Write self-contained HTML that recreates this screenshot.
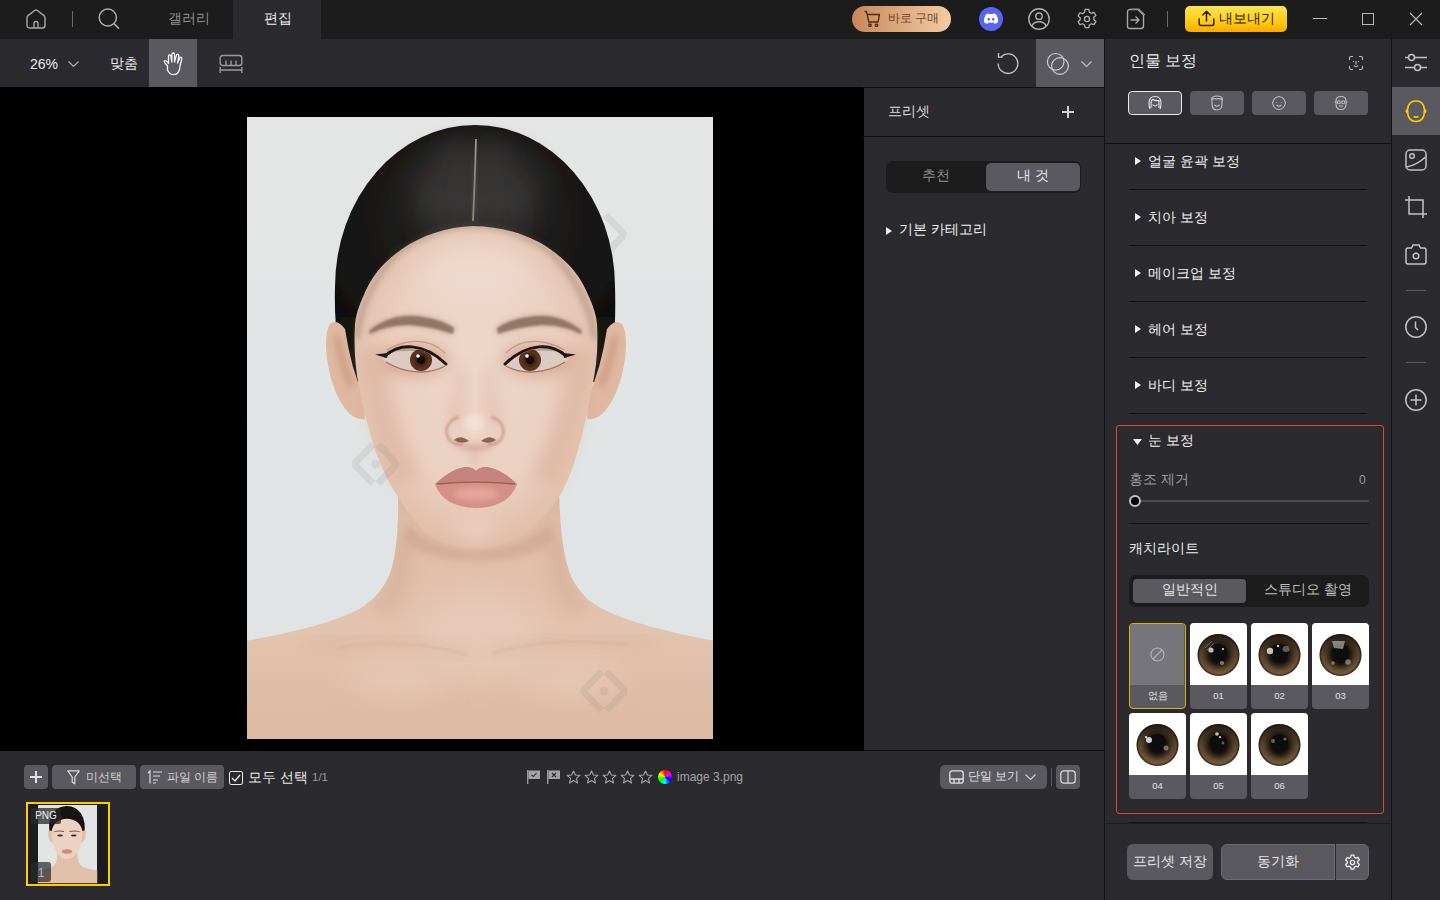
<!DOCTYPE html>
<html><head><meta charset="utf-8">
<style>
*{margin:0;padding:0;box-sizing:border-box}
html,body{width:1440px;height:900px;overflow:hidden;background:#2b2a2f;font-family:"Liberation Sans",sans-serif;color:#e6e6e6}
.a{position:absolute}
svg{position:absolute;overflow:visible}
.t{position:absolute;white-space:nowrap;line-height:1}
</style></head><body>
<!-- top bar -->
<div class="a" style="left:0;top:0;width:1440px;height:39px;background:#1c1c1c"></div>
<div class="a" style="left:233px;top:0;width:88px;height:39px;background:#2b2a2f"></div>
<!-- toolbar -->
<div class="a" style="left:0;top:39px;width:1104px;height:48px;background:#2b2a2f"></div>
<div class="a" style="left:149px;top:39px;width:48px;height:48px;background:#5a5960"></div>
<div class="a" style="left:1036px;top:39px;width:68px;height:48px;background:#5a5960"></div>
<!-- canvas -->
<div class="a" style="left:0;top:87px;width:864px;height:664px;background:#000"></div>

<!-- PHOTO -->
<svg style="left:247px;top:117px;overflow:hidden" width="466" height="622" viewBox="0 0 466 622">
<defs>
<filter id="b1" x="-20%" y="-20%" width="140%" height="140%"><feGaussianBlur stdDeviation="1"/></filter>
<filter id="b2" x="-50%" y="-50%" width="200%" height="200%"><feGaussianBlur stdDeviation="3"/></filter>
<filter id="b3" x="-50%" y="-50%" width="200%" height="200%"><feGaussianBlur stdDeviation="8"/></filter>
<filter id="b4" x="-50%" y="-50%" width="200%" height="200%"><feGaussianBlur stdDeviation="14"/></filter>
<filter id="b05"><feGaussianBlur stdDeviation="0.6"/></filter>
<linearGradient id="bg" x1="0" y1="0" x2="0" y2="1"><stop offset="0" stop-color="#e4e6e6"/><stop offset="1" stop-color="#dfe3e3"/></linearGradient>
<radialGradient id="sk" cx="50%" cy="45%" r="60%"><stop offset="0" stop-color="#eed7ca"/><stop offset="0.6" stop-color="#ebd0c0"/><stop offset="1" stop-color="#ddb9a3"/></radialGradient>
<linearGradient id="sh" x1="0" y1="0" x2="0" y2="1"><stop offset="0" stop-color="#d8b49e"/><stop offset="0.2" stop-color="#dfbea9"/><stop offset="0.55" stop-color="#e3c4b0"/><stop offset="1" stop-color="#dcb9a2"/></linearGradient>
<radialGradient id="hr" cx="50%" cy="35%" r="65%"><stop offset="0" stop-color="#2c2a29"/><stop offset="0.5" stop-color="#1c1a19"/><stop offset="1" stop-color="#0f0e0e"/></radialGradient>
</defs>
<rect width="466" height="622" fill="url(#bg)"/>
<!-- shoulders + neck -->
<path fill="url(#sh)" filter="url(#b05)" d="M151 370 C152 420 148 448 140 463 C132 478 122 486 112 492 C90 504 50 515 -2 524 L-2 624 L468 624 L468 524 C420 515 378 504 356 492 C344 486 334 478 326 463 C318 448 313 420 312 370 Z"/>
<defs><clipPath id="bodyc"><path d="M151 370 C152 420 148 448 140 463 C132 478 122 486 112 492 C90 504 50 515 -2 524 L-2 624 L468 624 L468 524 C420 515 378 504 356 492 C344 486 334 478 326 463 C318 448 313 420 312 370 Z"/></clipPath></defs><g clip-path="url(#bodyc)">
<!-- neck center light -->
<ellipse cx="232" cy="520" rx="60" ry="45" fill="#e8cdbb" opacity="0.6" filter="url(#b4)"/>
<!-- under chin shadow -->
<path fill="#c4957f" opacity="0.4" filter="url(#b2)" d="M160 408 Q192 432 228 434 Q266 432 304 408 L308 422 Q285 444 228 444 Q172 442 155 422Z"/>
<!-- neck side shading -->
<path fill="#cfa58f" opacity="0.45" filter="url(#b3)" d="M146 420 Q150 470 120 492 L145 498 Q168 470 166 420Z"/>
<path fill="#cfa58f" opacity="0.45" filter="url(#b3)" d="M320 420 Q316 470 346 492 L321 498 Q298 470 300 420Z"/>
</g>
<g transform="translate(356 117.5)" fill="none" stroke="#7a7a7a" stroke-width="7" stroke-linejoin="round" opacity="0.13"><path d="M-2.5 -19.5 L-19.5 -2 Q-21 0 -19.5 2 L-2.5 19.5"/><path d="M2.5 -19.5 L19.5 -2 Q21 0 19.5 2 L2.5 19.5"/><circle cx="0" cy="0" r="4.5" fill="#7a7a7a" stroke="none"/></g>
<!-- hair -->
<path fill="url(#hr)" filter="url(#b05)" d="M88 170 A140 162 0 0 1 368 170 Q369 205 366 232 Q360 255 350 265 L110 265 Q96 255 92 232 Q87 205 88 170Z"/>
<!-- hair sheen -->
<ellipse cx="200" cy="75" rx="35" ry="38" fill="#4a4746" opacity="0.5" filter="url(#b4)"/>
<ellipse cx="258" cy="75" rx="35" ry="38" fill="#4a4746" opacity="0.5" filter="url(#b4)"/>
<ellipse cx="228" cy="40" rx="40" ry="20" fill="#3a3837" opacity="0.5" filter="url(#b3)"/>
<!-- ears -->
<path fill="#15120f" filter="url(#b05)" d="M92 200 L112 200 L114 262 Q108 250 100 230 Q94 215 92 200Z"/><path fill="#15120f" filter="url(#b05)" d="M366 200 L346 200 L344 262 Q350 250 358 230 Q364 215 366 200Z"/>
<path fill="#dfb8a1" filter="url(#b05)" d="M98 212 Q90 201 83 207 Q77 216 80 242 Q85 276 100 294 Q109 304 118 302 L117 280 Q104 252 98 212 Z"/><path fill="#dfb8a1" filter="url(#b05)" d="M 360 212 Q 368 201 375 207 Q 381 216 378 242 Q 373 276 358 294 Q 349 304 340 302 L 341 280 Q 354 252 360 212 Z"/>
<path fill="#bf8970" opacity="0.5" filter="url(#b2)" d="M87 218 Q90 250 102 272 L108 266 Q98 245 95 220Z"/><path fill="#bf8970" opacity="0.5" filter="url(#b2)" d="M 371 218 Q 368 250 356 272 L 350 266 Q 360 245 363 220 Z"/>
<!-- face -->
<path fill="url(#sk)" filter="url(#b05)" d="M226 109 C200 110 175 118 155 132 C135 146 124 160 116 180 Q109 195 108 207 Q106 240 112 270 Q118 300 128 333 Q140 365 153 383 Q165 402 176 413 Q200 431 228 431 Q256 431 283 413 Q296 402 310 383 Q322 365 331 333 Q340 300 345 270 Q352 240 350 207 Q349 195 342 180 C334 160 323 146 303 132 C283 118 258 110 226 109Z"/>
<!-- part -->
<path d="M229 22 Q228 60 226 104" stroke="#a09388" stroke-width="1.8" fill="none" filter="url(#b05)"/>
<path d="M229 45 Q228 70 226 104" stroke="#5e5650" stroke-width="6" fill="none" opacity="0.35" filter="url(#b2)"/>
<!-- hairline soft -->
<path d="M110 222 Q114 175 150 136 Q190 108 226 109 Q266 108 305 136 Q342 175 348 222" stroke="#5a463b" stroke-width="4" fill="none" opacity="0.4" filter="url(#b2)"/>
<!-- face side shading -->
<path fill="#d3a58f" opacity="0.4" filter="url(#b3)" d="M112 230 Q115 300 150 370 L175 360 Q145 300 140 230Z"/>
<path fill="#d3a58f" opacity="0.4" filter="url(#b3)" d="M346 230 Q343 300 308 370 L283 360 Q313 300 318 230Z"/>
<!-- forehead highlight -->
<ellipse cx="228" cy="160" rx="55" ry="30" fill="#f2e0d6" opacity="0.5" filter="url(#b4)"/>
<!-- eyebrows -->
<path fill="#9a7c6b" opacity="0.6" filter="url(#b2)" d="M122 214 C135 203 150 198 165 199 C185 200 198 205 207 211 L206 217 C192 212 178 209 162 208 C148 208 134 211 123 217 Z"/>
<path fill="#9a7c6b" opacity="0.6" filter="url(#b2)" d="M 335 214 C 322 203 307 198 292 199 C 272 200 259 205 250 211 L 251 217 C 265 212 279 209 295 208 C 309 208 323 211 334 217 Z"/>
<path fill="#8a6d5d" opacity="0.85" filter="url(#b1)" d="M122 214 C135 203 150 198 165 199 C185 200 198 205 207 211 L206 217 C192 212 178 209 162 208 C148 208 134 211 123 217 Z"/>
<path fill="#8a6d5d" opacity="0.85" filter="url(#b1)" d="M 335 214 C 322 203 307 198 292 199 C 272 200 259 205 250 211 L 251 217 C 265 212 279 209 295 208 C 309 208 323 211 334 217 Z"/>
<!-- eye shadow -->
<ellipse cx="168" cy="243" rx="34" ry="15" fill="#c9866f" opacity="0.6" filter="url(#b3)"/>
<ellipse cx="289" cy="243" rx="34" ry="15" fill="#c9866f" opacity="0.6" filter="url(#b3)"/>
<defs><clipPath id="eL"><path d="M135 242 C148 230 172 224 199 248 C182 257 156 257 135 242 Z"/></clipPath><clipPath id="eR"><path d="M 322 242 C 309 230 285 224 258 248 C 275 257 301 257 322 242 Z"/></clipPath></defs>
<path d="M135 242 C148 230 172 224 199 248 C182 257 156 257 135 242 Z" fill="#dccbc3"/>
<g clip-path="url(#eL)"><circle cx="174" cy="243" r="11" fill="#5b3220"/><circle cx="174" cy="243" r="7" fill="#3c2013" opacity="0.6"/><circle cx="174" cy="243" r="4.3" fill="#150b07"/><circle cx="171" cy="239" r="1.8" fill="#fff"/><path d="M120 223 H340 V236 Q174 231 120 236Z" fill="#3a2218" opacity="0.25"/></g>
<path d="M140 233 C158 222 182 220 198 236" stroke="#a87464" stroke-width="1.3" fill="none" opacity="0.55" filter="url(#b05)"/>
<path d="M199 247 C176 225 152 226 138 239" stroke="#1f1410" stroke-width="3" fill="none" stroke-linecap="round" filter="url(#b05)"/>
<path d="M139 245 C158 257 182 258 198 249" stroke="#8f6052" stroke-width="1.4" fill="none" opacity="0.75" filter="url(#b05)"/>
<path d="M 322 242 C 309 230 285 224 258 248 C 275 257 301 257 322 242 Z" fill="#dccbc3"/>
<g clip-path="url(#eR)"><circle cx="283" cy="243" r="11" fill="#5b3220"/><circle cx="283" cy="243" r="7" fill="#3c2013" opacity="0.6"/><circle cx="283" cy="243" r="4.3" fill="#150b07"/><circle cx="280" cy="239" r="1.8" fill="#fff"/><path d="M120 223 H340 V236 Q283 231 120 236Z" fill="#3a2218" opacity="0.25"/></g>
<path d="M 317 233 C 299 222 275 220 259 236" stroke="#a87464" stroke-width="1.3" fill="none" opacity="0.55" filter="url(#b05)"/>
<path d="M 258 247 C 281 225 305 226 319 239" stroke="#1f1410" stroke-width="3" fill="none" stroke-linecap="round" filter="url(#b05)"/>
<path d="M 318 245 C 299 257 275 258 259 249" stroke="#8f6052" stroke-width="1.4" fill="none" opacity="0.75" filter="url(#b05)"/>
<path d="M141 236 L128 237.5 L140 241 Z" fill="#1f1410" filter="url(#b05)"/><path d="M316 236 L329 237.5 L317 241 Z" fill="#1f1410" filter="url(#b05)"/>
<!-- nose -->
<path fill="#cf9b85" opacity="0.45" filter="url(#b3)" d="M212 250 Q208 285 202 305 L212 312 Q216 285 219 250Z"/>
<path fill="#cf9b85" opacity="0.45" filter="url(#b3)" d="M244 250 Q248 285 254 305 L244 312 Q240 285 237 250Z"/>
<path d="M212 300 C203 302 198 310 200 318 C202 325 208 328 216 327" stroke="#bf8a74" stroke-width="3" fill="none" opacity="0.6" filter="url(#b1)"/>
<path d="M 244 300 C 253 302 258 310 256 318 C 254 325 248 328 240 327" stroke="#bf8a74" stroke-width="3" fill="none" opacity="0.6" filter="url(#b1)"/>
<path fill="#c7917c" opacity="0.7" filter="url(#b2)" d="M204 322 Q212 334 228 334 Q244 334 252 322 Q244 328 228 328 Q212 328 204 322Z"/>
<ellipse cx="227" cy="306" rx="10" ry="9" fill="#f4e2d8" opacity="0.9" filter="url(#b2)"/>
<path fill="#7e5040" opacity="0.85" filter="url(#b05)" d="M207 323 Q213 317 222 324 Q214 328 207 323Z M249 323 Q243 317 234 324 Q242 328 249 323Z"/>
<!-- philtrum -->
<ellipse cx="228" cy="342" rx="6" ry="8" fill="#e0bca8" opacity="0.5" filter="url(#b2)"/>
<!-- lips -->
<path fill="#d48f86" filter="url(#b05)" d="M188 367 Q204 352 218 350 Q226 350 229 354 Q232 350 240 350 Q254 352 270 367 Q262 390 229 391 Q196 390 188 367Z"/>
<path fill="#c4847b" filter="url(#b05)" d="M188 367 Q204 352 218 350 Q226 350 229 354 Q232 350 240 350 Q254 352 270 367 Q229 360 188 367Z"/>
<path d="M190 367 Q229 363 268 367" stroke="#9e5e57" stroke-width="1.6" fill="none" filter="url(#b05)"/>
<ellipse cx="229" cy="377" rx="22" ry="6" fill="#eab0a6" opacity="0.75" filter="url(#b2)"/>
<!-- chin highlight -->
<ellipse cx="228" cy="412" rx="20" ry="10" fill="#f0dcd0" opacity="0.45" filter="url(#b3)"/>
<g clip-path="url(#bodyc)">
<!-- collarbone -->
<path d="M60 528 Q150 518 222 538" stroke="#c99e88" stroke-width="6" fill="none" opacity="0.35" filter="url(#b3)"/>
<path d="M406 526 Q316 516 242 536" stroke="#c99e88" stroke-width="6" fill="none" opacity="0.35" filter="url(#b3)"/>
<path d="M90 531 Q160 520 220 538" stroke="#cda38d" stroke-width="1.5" fill="none" opacity="0.45" filter="url(#b1)"/>
<path d="M380 528 Q310 518 246 536" stroke="#cda38d" stroke-width="1.5" fill="none" opacity="0.45" filter="url(#b1)"/>
<ellipse cx="150" cy="560" rx="50" ry="20" fill="#ead0bf" opacity="0.5" filter="url(#b4)"/>
<ellipse cx="320" cy="560" rx="50" ry="20" fill="#ead0bf" opacity="0.5" filter="url(#b4)"/>
</g>
<!-- watermarks -->
<g transform="translate(128.5 347)" fill="none" stroke="#7a7a7a" stroke-width="7" stroke-linejoin="round" opacity="0.13"><path d="M-2.5 -19.5 L-19.5 -2 Q-21 0 -19.5 2 L-2.5 19.5"/><path d="M2.5 -19.5 L19.5 -2 Q21 0 19.5 2 L2.5 19.5"/><circle cx="0" cy="0" r="4.5" fill="#7a7a7a" stroke="none"/></g>
<g transform="translate(357 574)" fill="none" stroke="#7a7a7a" stroke-width="7" stroke-linejoin="round" opacity="0.13"><path d="M-2.5 -19.5 L-19.5 -2 Q-21 0 -19.5 2 L-2.5 19.5"/><path d="M2.5 -19.5 L19.5 -2 Q21 0 19.5 2 L2.5 19.5"/><circle cx="0" cy="0" r="4.5" fill="#7a7a7a" stroke="none"/></g>
</svg>
<!-- preset panel -->
<div class="a" style="left:864px;top:88px;width:240px;height:662px;background:#2b2a2f"></div>
<div class="a" style="left:863px;top:136px;width:241px;height:1px;background:#131315"></div>
<div class="a" style="left:863px;top:87px;width:241px;height:1px;background:#131315"></div>

<!-- PRESET CONTENT -->
<div class="t" style="left:888px;top:104px;font-size:14px;color:#dcdcdc">프리셋</div>
<div class="a" style="left:1062px;top:111px;width:12px;height:1.5px;background:#cfcfcf"></div>
<div class="a" style="left:1067.25px;top:106px;width:1.5px;height:12px;background:#cfcfcf"></div>
<div class="a" style="left:886px;top:161px;width:195px;height:32px;border-radius:7px;background:#1c1c1d"></div>
<div class="a" style="left:986px;top:163px;width:94px;height:28px;border-radius:5px;background:#5a5960"></div>
<div class="t" style="left:886px;top:168px;width:100px;text-align:center;font-size:14px;color:#8e8e8e">추천</div>
<div class="t" style="left:986px;top:168px;width:94px;text-align:center;font-size:14px;color:#e6e6e6">내 것</div>
<svg style="left:886px;top:227px" width="6" height="8" viewBox="0 0 6 8"><path d="M0 0 L6 4 L0 8Z" fill="#f0f0f0"/></svg>
<div class="t" style="left:899px;top:222px;font-size:14px;color:#f0f0f0">기본 카테고리</div>
<!-- right panel -->
<div class="a" style="left:1104px;top:39px;width:1px;height:861px;background:#131315"></div>
<div class="a" style="left:1391px;top:39px;width:1px;height:861px;background:#131315"></div>
<div class="a" style="left:1392px;top:87px;width:48px;height:48px;background:#5a5960"></div>
<div class="a" style="left:1105px;top:143px;width:286px;height:1px;background:#131315"></div>

<!-- RIGHT PANEL CONTENT -->
<div class="t" style="left:1129px;top:53px;font-size:16px;color:#e8e8e8">인물 보정</div>
<svg style="left:1349px;top:56px" width="14" height="14" viewBox="0 0 14 14" fill="none" stroke="#bdbdbd" stroke-width="1.1"><path d="M0.5 4 V2 Q0.5 0.5 2 0.5 H4 M10 0.5 H12 Q13.5 0.5 13.5 2 V4 M13.5 10 V12 Q13.5 13.5 12 13.5 H10 M4 13.5 H2 Q0.5 13.5 0.5 12 V10"/><path d="M4.5 5 V6 M9.5 5 V6 M7 5 V8 H6.3 M4.8 9.8 Q7 11.2 9.2 9.8"/></svg>
<div class="a" style="left:1128px;top:91px;width:54px;height:24px;border-radius:4px;background:#5a5960;border:1.5px solid #e8e8e8"></div>
<div class="a" style="left:1190px;top:91px;width:54px;height:24px;border-radius:4px;background:#5a5960"></div>
<div class="a" style="left:1252px;top:91px;width:54px;height:24px;border-radius:4px;background:#5a5960"></div>
<div class="a" style="left:1314px;top:91px;width:54px;height:24px;border-radius:4px;background:#5a5960"></div>
<svg style="left:1147px;top:95px" width="16" height="16" viewBox="0 0 16 16" fill="none" stroke="#e6e6e6" stroke-width="1.1"><path d="M3 14 Q2 12 2 8 Q2 1.5 8 1.5 Q14 1.5 14 8 Q14 12 13 14"/><path d="M4 13 V8 Q4 5 6 4.5 Q8 6 12 5.5 V13"/><path d="M5.5 9.5 Q8 12.5 10.5 9.5"/></svg>
<svg style="left:1209px;top:95px" width="16" height="16" viewBox="0 0 16 16" fill="none" stroke="#bdbdbd" stroke-width="1.1"><path d="M3 4 V9 Q3 15 8 15 Q13 15 13 9 V4"/><path d="M2.5 4.5 Q2.5 1 8 1 Q13.5 1 13.5 4.5 Q10 3 8 4 Q5 3 2.5 4.5Z"/><path d="M5.5 10 Q8 12.5 10.5 10"/></svg>
<svg style="left:1271px;top:95px" width="16" height="16" viewBox="0 0 16 16" fill="none" stroke="#bdbdbd" stroke-width="1.1"><path d="M8 1.5 Q13 2 14.5 8 Q13 14.5 8 14.5 Q3 14.5 1.5 8 Q3 2 8 1.5Z"/><path d="M5.5 7 V7.5 M10.5 7 V7.5 M5.5 10 Q8 12.5 10.5 10"/></svg>
<svg style="left:1333px;top:95px" width="16" height="16" viewBox="0 0 16 16" fill="none" stroke="#bdbdbd" stroke-width="1.1"><path d="M3 6 Q3 1.5 8 1.5 Q13 1.5 13 6 V9 Q13 14.5 8 14.5 Q3 14.5 3 9Z"/><path d="M1.5 7 H3 M13 7 H14.5"/><circle cx="5.8" cy="7.2" r="1.5"/><circle cx="10.2" cy="7.2" r="1.5"/><path d="M6 11 H10"/></svg>
<svg style="left:1135px;top:157px" width="6" height="8" viewBox="0 0 6 8"><path d="M0 0 L6 4 L0 8Z" fill="#f0f0f0"/></svg>
<div class="t" style="left:1148px;top:154px;font-size:14px;color:#f0f0f0">얼굴 윤곽 보정</div>
<div class="a" style="left:1129px;top:189px;width:238px;height:1px;background:#141416"></div>
<svg style="left:1135px;top:213px" width="6" height="8" viewBox="0 0 6 8"><path d="M0 0 L6 4 L0 8Z" fill="#f0f0f0"/></svg>
<div class="t" style="left:1148px;top:210px;font-size:14px;color:#f0f0f0">치아 보정</div>
<div class="a" style="left:1129px;top:245px;width:238px;height:1px;background:#141416"></div>
<svg style="left:1135px;top:269px" width="6" height="8" viewBox="0 0 6 8"><path d="M0 0 L6 4 L0 8Z" fill="#f0f0f0"/></svg>
<div class="t" style="left:1148px;top:266px;font-size:14px;color:#f0f0f0">메이크업 보정</div>
<div class="a" style="left:1129px;top:301px;width:238px;height:1px;background:#141416"></div>
<svg style="left:1135px;top:325px" width="6" height="8" viewBox="0 0 6 8"><path d="M0 0 L6 4 L0 8Z" fill="#f0f0f0"/></svg>
<div class="t" style="left:1148px;top:322px;font-size:14px;color:#f0f0f0">헤어 보정</div>
<div class="a" style="left:1129px;top:357px;width:238px;height:1px;background:#141416"></div>
<svg style="left:1135px;top:381px" width="6" height="8" viewBox="0 0 6 8"><path d="M0 0 L6 4 L0 8Z" fill="#f0f0f0"/></svg>
<div class="t" style="left:1148px;top:378px;font-size:14px;color:#f0f0f0">바디 보정</div>
<div class="a" style="left:1129px;top:413px;width:238px;height:1px;background:#141416"></div>

<div class="a" style="left:1116px;top:425px;width:268px;height:389px;border:1px solid #d9473d;border-radius:3px"></div>
<svg style="left:1133px;top:439px" width="9" height="6" viewBox="0 0 9 6"><path d="M0 0 H9 L4.5 6Z" fill="#f0f0f0"/></svg>
<div class="t" style="left:1148px;top:433px;font-size:14px;color:#f0f0f0">눈 보정</div>
<div class="t" style="left:1129px;top:472px;font-size:14px;color:#9c9c9c">홍조 제거</div>
<div class="t" style="left:1359px;top:474px;font-size:12px;color:#9c9c9c">0</div>
<div class="a" style="left:1134px;top:500px;width:235px;height:2px;border-radius:1px;background:#4b4a50"></div>
<div class="a" style="left:1129px;top:495px;width:12px;height:12px;border-radius:50%;background:#000;border:2.5px solid #c2c2c2"></div>
<div class="a" style="left:1129px;top:523px;width:240px;height:1px;background:#141416"></div>
<div class="t" style="left:1129px;top:541px;font-size:14px;color:#ececec">캐치라이트</div>
<div class="a" style="left:1129px;top:575px;width:240px;height:32px;border-radius:7px;background:#1c1c1d"></div>
<div class="a" style="left:1133px;top:579px;width:113px;height:24px;border-radius:4px;background:#5a5960"></div>
<div class="t" style="left:1133px;top:582px;width:113px;text-align:center;font-size:14px;color:#e2e2e2">일반적인</div>
<div class="t" style="left:1250px;top:582px;width:116px;text-align:center;font-size:14px;color:#bcbcbc">스튜디오 촬영</div>
<div class="a" style="left:1129px;top:623px;width:57px;height:86px;border-radius:4px;overflow:hidden;background:#5a5960;border:1.5px solid #e0b000"><div class="a" style="left:0;top:0;width:54px;height:61px;background:#76757b"></div></div>
<svg style="left:1150px;top:647px" width="15" height="15" viewBox="0 0 15 15" fill="none" stroke="#b4b4b8" stroke-width="1.1"><circle cx="7.5" cy="7.5" r="6.5"/><path d="M3 12 L12 3"/></svg>
<div class="t" style="left:1129px;top:691px;width:57px;text-align:center;font-size:9.5px;color:#e0e0e0">없음</div>
<div class="a" style="left:1190px;top:623px;width:57px;height:86px;border-radius:4px;overflow:hidden;background:#5a5960"><div class="a" style="left:0;top:0;width:57px;height:62px;background:#fff"></div></div>
<div class="t" style="left:1190px;top:691px;width:57px;text-align:center;font-size:9.5px;color:#e0e0e0">01</div>
<div class="a" style="left:1251px;top:623px;width:57px;height:86px;border-radius:4px;overflow:hidden;background:#5a5960"><div class="a" style="left:0;top:0;width:57px;height:62px;background:#fff"></div></div>
<div class="t" style="left:1251px;top:691px;width:57px;text-align:center;font-size:9.5px;color:#e0e0e0">02</div>
<div class="a" style="left:1312px;top:623px;width:57px;height:86px;border-radius:4px;overflow:hidden;background:#5a5960"><div class="a" style="left:0;top:0;width:57px;height:62px;background:#fff"></div></div>
<div class="t" style="left:1312px;top:691px;width:57px;text-align:center;font-size:9.5px;color:#e0e0e0">03</div>
<div class="a" style="left:1129px;top:713px;width:57px;height:86px;border-radius:4px;overflow:hidden;background:#5a5960"><div class="a" style="left:0;top:0;width:57px;height:62px;background:#fff"></div></div>
<div class="t" style="left:1129px;top:781px;width:57px;text-align:center;font-size:9.5px;color:#e0e0e0">04</div>
<div class="a" style="left:1190px;top:713px;width:57px;height:86px;border-radius:4px;overflow:hidden;background:#5a5960"><div class="a" style="left:0;top:0;width:57px;height:62px;background:#fff"></div></div>
<div class="t" style="left:1190px;top:781px;width:57px;text-align:center;font-size:9.5px;color:#e0e0e0">05</div>
<div class="a" style="left:1251px;top:713px;width:57px;height:86px;border-radius:4px;overflow:hidden;background:#5a5960"><div class="a" style="left:0;top:0;width:57px;height:62px;background:#fff"></div></div>
<div class="t" style="left:1251px;top:781px;width:57px;text-align:center;font-size:9.5px;color:#e0e0e0">06</div>

<svg style="left:1190px;top:623px" width="57" height="62" viewBox="0 0 57 62"><defs><radialGradient id="ir0" cx="50%" cy="50%" r="50%"><stop offset="0" stop-color="#0d0b09"/><stop offset="0.38" stop-color="#121010"/><stop offset="0.48" stop-color="#2e2519"/><stop offset="0.72" stop-color="#6e5337"/><stop offset="0.86" stop-color="#7a5d3e"/><stop offset="0.95" stop-color="#3c2f22"/><stop offset="1" stop-color="#3c2f22" stop-opacity="0"/></radialGradient><linearGradient id="ish0" x1="0" y1="0" x2="0" y2="1"><stop offset="0" stop-color="#15110d" stop-opacity="0.85"/><stop offset="0.5" stop-color="#15110d" stop-opacity="0.3"/><stop offset="1" stop-color="#15110d" stop-opacity="0"/></linearGradient><filter id="ef0"><feGaussianBlur stdDeviation="0.7"/></filter></defs><g filter="url(#ef0)"><circle cx="28.5" cy="32" r="21.5" fill="url(#ir0)"/><circle cx="28.5" cy="32" r="21" fill="url(#ish0)"/><ellipse cx="28.5" cy="29" rx="8.5" ry="8" fill="#0c0a09"/></g><circle cx="21" cy="27" r="2.6" fill="#e8e8e8" opacity="0.8"/><circle cx="33" cy="26" r="0.9" fill="#fff"/><circle cx="32" cy="40" r="2" fill="#d0c0b0" opacity="0.6"/><path d="M15 25 L22 18 M17 27 L24 20" stroke="#aaa" stroke-width="0.8" opacity="0.6"/></svg>
<svg style="left:1251px;top:623px" width="57" height="62" viewBox="0 0 57 62"><defs><radialGradient id="ir1" cx="50%" cy="50%" r="50%"><stop offset="0" stop-color="#0d0b09"/><stop offset="0.38" stop-color="#121010"/><stop offset="0.48" stop-color="#2e2519"/><stop offset="0.72" stop-color="#6e5337"/><stop offset="0.86" stop-color="#7a5d3e"/><stop offset="0.95" stop-color="#3c2f22"/><stop offset="1" stop-color="#3c2f22" stop-opacity="0"/></radialGradient><linearGradient id="ish1" x1="0" y1="0" x2="0" y2="1"><stop offset="0" stop-color="#15110d" stop-opacity="0.85"/><stop offset="0.5" stop-color="#15110d" stop-opacity="0.3"/><stop offset="1" stop-color="#15110d" stop-opacity="0"/></linearGradient><filter id="ef1"><feGaussianBlur stdDeviation="0.7"/></filter></defs><g filter="url(#ef1)"><circle cx="28.5" cy="32" r="21.5" fill="url(#ir1)"/><circle cx="28.5" cy="32" r="21" fill="url(#ish1)"/><ellipse cx="28.5" cy="29" rx="8.5" ry="8" fill="#0c0a09"/></g><circle cx="19" cy="28" r="3.2" fill="#e0e0e0" opacity="0.85"/><circle cx="27" cy="23" r="1.1" fill="#fff"/><ellipse cx="35" cy="26" rx="3.5" ry="3" fill="#aaa" opacity="0.5"/></svg>
<svg style="left:1312px;top:623px" width="57" height="62" viewBox="0 0 57 62"><defs><radialGradient id="ir2" cx="50%" cy="50%" r="50%"><stop offset="0" stop-color="#0d0b09"/><stop offset="0.38" stop-color="#121010"/><stop offset="0.48" stop-color="#2e2519"/><stop offset="0.72" stop-color="#6e5337"/><stop offset="0.86" stop-color="#7a5d3e"/><stop offset="0.95" stop-color="#3c2f22"/><stop offset="1" stop-color="#3c2f22" stop-opacity="0"/></radialGradient><linearGradient id="ish2" x1="0" y1="0" x2="0" y2="1"><stop offset="0" stop-color="#15110d" stop-opacity="0.85"/><stop offset="0.5" stop-color="#15110d" stop-opacity="0.3"/><stop offset="1" stop-color="#15110d" stop-opacity="0"/></linearGradient><filter id="ef2"><feGaussianBlur stdDeviation="0.7"/></filter></defs><g filter="url(#ef2)"><circle cx="28.5" cy="32" r="21.5" fill="url(#ir2)"/><circle cx="28.5" cy="32" r="21" fill="url(#ish2)"/><ellipse cx="28.5" cy="29" rx="8.5" ry="8" fill="#0c0a09"/></g><path d="M20 18 L33 18 L31 26 L22 25Z" fill="#bbb" opacity="0.65"/><circle cx="21" cy="40" r="1.8" fill="#ccc" opacity="0.5"/><circle cx="36" cy="39" r="2.8" fill="#ccc" opacity="0.5"/></svg>
<svg style="left:1129px;top:713px" width="57" height="62" viewBox="0 0 57 62"><defs><radialGradient id="ir3" cx="50%" cy="50%" r="50%"><stop offset="0" stop-color="#0d0b09"/><stop offset="0.38" stop-color="#121010"/><stop offset="0.48" stop-color="#2e2519"/><stop offset="0.72" stop-color="#6e5337"/><stop offset="0.86" stop-color="#7a5d3e"/><stop offset="0.95" stop-color="#3c2f22"/><stop offset="1" stop-color="#3c2f22" stop-opacity="0"/></radialGradient><linearGradient id="ish3" x1="0" y1="0" x2="0" y2="1"><stop offset="0" stop-color="#15110d" stop-opacity="0.85"/><stop offset="0.5" stop-color="#15110d" stop-opacity="0.3"/><stop offset="1" stop-color="#15110d" stop-opacity="0"/></linearGradient><filter id="ef3"><feGaussianBlur stdDeviation="0.7"/></filter></defs><g filter="url(#ef3)"><circle cx="28.5" cy="32" r="21.5" fill="url(#ir3)"/><circle cx="28.5" cy="32" r="21" fill="url(#ish3)"/><ellipse cx="28.5" cy="29" rx="8.5" ry="8" fill="#0c0a09"/></g><circle cx="20" cy="27" r="3" fill="#eee" opacity="0.85"/><circle cx="17" cy="24" r="1" fill="#fff"/><circle cx="37" cy="35" r="2.5" fill="#ccc" opacity="0.5"/></svg>
<svg style="left:1190px;top:713px" width="57" height="62" viewBox="0 0 57 62"><defs><radialGradient id="ir4" cx="50%" cy="50%" r="50%"><stop offset="0" stop-color="#0d0b09"/><stop offset="0.38" stop-color="#121010"/><stop offset="0.48" stop-color="#2e2519"/><stop offset="0.72" stop-color="#6e5337"/><stop offset="0.86" stop-color="#7a5d3e"/><stop offset="0.95" stop-color="#3c2f22"/><stop offset="1" stop-color="#3c2f22" stop-opacity="0"/></radialGradient><linearGradient id="ish4" x1="0" y1="0" x2="0" y2="1"><stop offset="0" stop-color="#15110d" stop-opacity="0.85"/><stop offset="0.5" stop-color="#15110d" stop-opacity="0.3"/><stop offset="1" stop-color="#15110d" stop-opacity="0"/></linearGradient><filter id="ef4"><feGaussianBlur stdDeviation="0.7"/></filter></defs><g filter="url(#ef4)"><circle cx="28.5" cy="32" r="21.5" fill="url(#ir4)"/><circle cx="28.5" cy="32" r="21" fill="url(#ish4)"/><ellipse cx="28.5" cy="29" rx="8.5" ry="8" fill="#0c0a09"/></g><circle cx="27" cy="21" r="1.8" fill="#eee" opacity="0.8"/><circle cx="30" cy="24" r="0.9" fill="#fff"/><circle cx="33" cy="30" r="1.4" fill="#bbb" opacity="0.5"/></svg>
<svg style="left:1251px;top:713px" width="57" height="62" viewBox="0 0 57 62"><defs><radialGradient id="ir5" cx="50%" cy="50%" r="50%"><stop offset="0" stop-color="#0d0b09"/><stop offset="0.38" stop-color="#121010"/><stop offset="0.48" stop-color="#2e2519"/><stop offset="0.72" stop-color="#6e5337"/><stop offset="0.86" stop-color="#7a5d3e"/><stop offset="0.95" stop-color="#3c2f22"/><stop offset="1" stop-color="#3c2f22" stop-opacity="0"/></radialGradient><linearGradient id="ish5" x1="0" y1="0" x2="0" y2="1"><stop offset="0" stop-color="#15110d" stop-opacity="0.85"/><stop offset="0.5" stop-color="#15110d" stop-opacity="0.3"/><stop offset="1" stop-color="#15110d" stop-opacity="0"/></linearGradient><filter id="ef5"><feGaussianBlur stdDeviation="0.7"/></filter></defs><g filter="url(#ef5)"><circle cx="28.5" cy="32" r="21.5" fill="url(#ir5)"/><circle cx="28.5" cy="32" r="21" fill="url(#ish5)"/><ellipse cx="28.5" cy="29" rx="8.5" ry="8" fill="#0c0a09"/></g><circle cx="22" cy="28" r="2" fill="#bbb" opacity="0.5"/><circle cx="34" cy="26" r="1.6" fill="#bbb" opacity="0.5"/></svg>
<div class="a" style="left:1129px;top:822px;width:238px;height:1px;background:#141416"></div>
<div class="a" style="left:1105px;top:823px;width:286px;height:1px;background:#1e1e20"></div>
<div class="a" style="left:1127px;top:844px;width:86px;height:36px;border-radius:6px;background:#5a5960"></div>
<div class="t" style="left:1127px;top:854px;width:86px;text-align:center;font-size:14px;color:#e6e6e6">프리셋 저장</div>
<div class="a" style="left:1221px;top:844px;width:114px;height:36px;border-radius:6px 0 0 6px;background:#5a5960;border:1px solid #6c6b72"></div>
<div class="t" style="left:1221px;top:854px;width:114px;text-align:center;font-size:14px;color:#e6e6e6">동기화</div>
<div class="a" style="left:1336px;top:844px;width:33px;height:36px;border-radius:0 6px 6px 0;background:#5a5960;border:1px solid #6c6b72;border-left:none"></div>
<svg style="left:1344px;top:854px" width="17" height="17" viewBox="0 0 24 24" fill="none" stroke="#f0f0f0" stroke-width="1.8" stroke-linejoin="round"><path d="M10 1.5h4l.6 3 2.2 1.3 2.9-1 2 3.4-2.3 2v2.6l2.3 2-2 3.4-2.9-1-2.2 1.3-.6 3h-4l-.6-3-2.2-1.3-2.9 1-2-3.4 2.3-2V10.7L2.3 8.6l2-3.4 2.9 1L9.4 4.5z"/><circle cx="12" cy="12" r="3"/></svg>
<!-- far right icons -->
<svg style="left:1404px;top:53px" width="24" height="20" viewBox="0 0 24 20" fill="none" stroke="#c4c4c4" stroke-width="1.5"><path d="M1 4.5 H4.5 M10.5 4.5 H23 M1 14.5 H10.5 M16.5 14.5 H23"/><circle cx="7.5" cy="4.5" r="3"/><circle cx="13.5" cy="14.5" r="3"/></svg>
<svg style="left:1405px;top:100px" width="22" height="23" viewBox="0 0 22 23" fill="none" stroke="#ffcc00" stroke-width="1.6"><path d="M11 1 Q19 1 19.5 10 Q19.5 21.5 11 21.5 Q2.5 21.5 2.5 10 Q3 1 11 1Z"/><path d="M2.5 9 L1.2 11 L2.5 13 M19.5 9 L20.8 11 L19.5 13"/><path d="M8.5 16.5 Q11 17.8 13.5 16.5"/></svg>
<svg style="left:1405px;top:149px" width="22" height="22" viewBox="0 0 22 22" fill="none" stroke="#c4c4c4" stroke-width="1.5"><rect x="1" y="1" width="20" height="20" rx="4"/><circle cx="7" cy="7" r="2.3"/><path d="M1.5 18 Q12 16 20.5 8"/></svg>
<svg style="left:1404px;top:195px" width="24" height="24" viewBox="0 0 24 24" fill="none" stroke="#c4c4c4" stroke-width="1.5"><path d="M5 1 V19 H23 M1 5 H19 V23"/></svg>
<svg style="left:1405px;top:244px" width="22" height="21" viewBox="0 0 22 21" fill="none" stroke="#c4c4c4" stroke-width="1.5"><path d="M1 6 Q1 4 3 4 H6.5 L8 1 H14 L15.5 4 H19 Q21 4 21 6 V18 Q21 20 19 20 H3 Q1 20 1 18Z"/><circle cx="11" cy="12" r="2.8"/></svg>
<div class="a" style="left:1406px;top:290px;width:20px;height:1px;background:#5a5a5e"></div>
<svg style="left:1405px;top:316px" width="22" height="22" viewBox="0 0 22 22" fill="none" stroke="#c4c4c4" stroke-width="1.5"><circle cx="11" cy="11" r="10.2"/><path d="M10.5 5.5 V11.5 L13 14"/></svg>
<div class="a" style="left:1406px;top:362px;width:20px;height:1px;background:#5a5a5e"></div>
<svg style="left:1405px;top:389px" width="22" height="22" viewBox="0 0 22 22" fill="none" stroke="#c4c4c4" stroke-width="1.5"><circle cx="11" cy="11" r="10.2"/><path d="M11 5.5 V16.5 M5.5 11 H16.5"/></svg>
<!-- filmstrip -->
<div class="a" style="left:864px;top:750px;width:240px;height:1px;background:#131315"></div>

<!-- TOPBAR CONTENT -->
<svg style="left:26px;top:9px" width="20" height="20" viewBox="0 0 20 20" fill="none" stroke="#a8a8a8" stroke-width="1.4" stroke-linejoin="round"><path d="M1 8.5 Q1 7.5 2 6.6 L8.6 1.5 Q10 0.5 11.4 1.5 L18 6.6 Q19 7.5 19 8.5 V16.5 Q19 19 16.5 19 H3.5 Q1 19 1 16.5 Z"/><path d="M8 19 V14.3 Q8 12.5 10 12.5 Q12 12.5 12 14.3 V19"/></svg>
<div class="a" style="left:72px;top:11px;width:1px;height:16px;background:#6a6a6a"></div>
<svg style="left:98px;top:8px" width="22" height="22" viewBox="0 0 22 22" fill="none" stroke="#b0b0b0" stroke-width="1.5"><circle cx="9.8" cy="9.5" r="8.6"/><path d="M16 15.6 L21 20.6"/></svg>
<div class="t" style="left:168px;top:11px;font-size:14px;color:#8f8f8f">갤러리</div>
<div class="t" style="left:264px;top:11px;font-size:14px;color:#f0f0f0">편집</div>
<div class="a" style="left:852px;top:6px;width:99px;height:26px;border-radius:13px;background:linear-gradient(90deg,#c98757,#f3cba3)"></div>
<svg style="left:864px;top:11px" width="16" height="16" viewBox="0 0 16 16" fill="none" stroke="#4a2a18" stroke-width="1.3" stroke-linejoin="round"><path d="M0.5 0.5 H2.5 L4.8 11 H14 L15.5 3.5 H3.3"/><circle cx="6" cy="14.2" r="1.2"/><circle cx="12.5" cy="14.2" r="1.2"/></svg>
<div class="t" style="left:888px;top:12px;font-size:12px;color:#6a4530">바로 구매</div>
<svg style="left:979px;top:7px" width="24" height="24" viewBox="0 0 24 24"><circle cx="12" cy="12" r="12" fill="#5865f2"/><path fill="#fff" d="M16.9 7.3a11.6 11.6 0 0 0-2.9-.9l-.4.8a10.8 10.8 0 0 0-3.2 0l-.4-.8a11.6 11.6 0 0 0-2.9.9C5.3 10 4.8 12.6 5 15.2a11.7 11.7 0 0 0 3.6 1.8l.8-1.2a7.5 7.5 0 0 1-1.2-.6l.3-.2a8.3 8.3 0 0 0 7.1 0l.3.2-1.2.6.8 1.2a11.6 11.6 0 0 0 3.5-1.8c.3-3-.5-5.6-2.1-7.9zM9.7 13.7c-.7 0-1.3-.6-1.3-1.4s.6-1.4 1.3-1.4 1.3.6 1.3 1.4-.6 1.4-1.3 1.4zm4.6 0c-.7 0-1.3-.6-1.3-1.4s.6-1.4 1.3-1.4 1.3.6 1.3 1.4-.6 1.4-1.3 1.4z"/></svg>
<svg style="left:1028px;top:8px" width="22" height="22" viewBox="0 0 22 22" fill="none" stroke="#b0b0b0" stroke-width="1.4"><circle cx="11" cy="11" r="10.2"/><circle cx="11" cy="8.2" r="3.2"/><path d="M3.8 18.2 Q5.5 13.8 11 13.8 Q16.5 13.8 18.2 18.2"/></svg>
<svg style="left:1076px;top:8px" width="22" height="22" viewBox="0 0 24 24" fill="none" stroke="#b0b0b0" stroke-width="1.4" stroke-linejoin="round"><path d="M10 1.5h4l.6 3 2.2 1.3 2.9-1 2 3.4-2.3 2v2.6l2.3 2-2 3.4-2.9-1-2.2 1.3-.6 3h-4l-.6-3-2.2-1.3-2.9 1-2-3.4 2.3-2V10.7L2.3 8.6l2-3.4 2.9 1L9.4 4.5z"/><circle cx="12" cy="12" r="2.8"/></svg>
<svg style="left:1125px;top:8px" width="22" height="22" viewBox="0 0 22 22" fill="none" stroke="#a8a8a8" stroke-width="1.4" stroke-linejoin="round"><path d="M6 1.5 H13 L18.5 7 V18 Q18.5 20.5 16 20.5 H5 Q2.5 20.5 2.5 18 V4 Q2.5 1.5 5 1.5 Z" fill="#1c1c1c"/><path d="M7 1.2 H14 L19.8 7" stroke="#8a8a8a"/><path d="M5.5 12 H14 M10.5 8.5 L14 12 L10.5 15.5"/></svg>
<div class="a" style="left:1167px;top:11px;width:1px;height:16px;background:#6a6a6a"></div>
<div class="a" style="left:1185px;top:6px;width:102px;height:26px;border-radius:5px;background:linear-gradient(180deg,#ffe456 0%,#ffcc10 60%,#ffa800 100%)"></div>
<svg style="left:1198px;top:10px" width="17" height="17" viewBox="0 0 17 17" fill="none" stroke="#2a2200" stroke-width="1.5" stroke-linecap="round" stroke-linejoin="round"><path d="M8.5 11 V1.5 M4.8 5 L8.5 1.3 L12.2 5"/><path d="M1.2 9 V13.5 Q1.2 15.5 3.2 15.5 H13.8 Q15.8 15.5 15.8 13.5 V9"/></svg>
<div class="t" style="left:1219px;top:11px;font-size:14px;color:#2b2400">내보내기</div>
<div class="a" style="left:1313px;top:18px;width:14px;height:1px;background:#b8b8b8"></div>
<div class="a" style="left:1362px;top:13px;width:12px;height:12px;border:1px solid #b8b8b8"></div>
<svg style="left:1410px;top:13px" width="12" height="12" viewBox="0 0 12 12" stroke="#b8b8b8" stroke-width="1.1"><path d="M0 0 L12 12 M12 0 L0 12"/></svg>

<!-- TOOLBAR CONTENT -->
<div class="t" style="left:30px;top:57px;font-size:14px;color:#ececec">26%</div>
<svg style="left:68px;top:61px" width="11" height="7" viewBox="0 0 11 7" fill="none" stroke="#b0b0b0" stroke-width="1.2"><path d="M0.5 0.5 L5.5 5.5 L10.5 0.5"/></svg>
<div class="t" style="left:110px;top:56px;font-size:14px;color:#ececec">맞춤</div>
<svg style="left:162px;top:52px" width="22" height="24" viewBox="0 0 22 24" fill="none" stroke="#f4f4f4" stroke-width="1.3" stroke-linecap="round" stroke-linejoin="round"><path d="M5.5 14 L3 11 Q1.5 9.5 2.8 8.8 Q4 8.2 5.5 10 L6.5 11.5 V4.5 Q6.5 2.8 7.6 2.8 Q8.7 2.8 8.9 4.5 L9.8 10 V2.5 Q10 1 11.2 1 Q12.5 1 12.5 2.5 V10 L14.3 3.5 Q14.8 2.2 15.9 2.5 Q17 2.8 16.8 4 L15.6 11 L17.8 6 Q18.4 5 19.3 5.4 Q20.1 5.9 19.8 7 L18 14 Q17.5 22.5 11.6 22.7 Q7.5 22.7 5.5 18 Z"/></svg>
<svg style="left:219px;top:54px" width="24" height="20" viewBox="0 0 24 20" fill="none" stroke="#9a9a9a" stroke-width="1.4"><rect x="1.2" y="1.5" width="21.6" height="10" rx="2.5"/><path d="M7 6.5 V11.5 M12 6.5 V11.5 M17 6.5 V11.5"/><path d="M1.2 16 H22.8 M1.2 13 V19 M22.8 13 V19"/></svg>
<svg style="left:995px;top:52px" width="24" height="24" viewBox="0 0 24 24" fill="none" stroke="#c8c8c8" stroke-width="1.3"><path d="M3.2 11.5 A9.8 9.8 0 1 0 6.2 4.6"/><path d="M3.5 1 V5.2 H7.7" stroke-width="1.3"/></svg>
<svg style="left:1045px;top:51px" width="26" height="26" viewBox="0 0 26 26" fill="none" stroke="#cfcfcf" stroke-width="1.2"><circle cx="10.7" cy="10.8" r="8.3"/><circle cx="15" cy="15" r="8.4"/></svg>
<svg style="left:1081px;top:61px" width="11" height="7" viewBox="0 0 11 7" fill="none" stroke="#c0c0c0" stroke-width="1.2"><path d="M0.5 0.5 L5.5 5.5 L10.5 0.5"/></svg>

<!-- FILMSTRIP CONTENT -->
<div class="a" style="left:24px;top:765px;width:24px;height:24px;border-radius:4px;background:#5a5960"></div>
<div class="a" style="left:30px;top:776px;width:12px;height:1.6px;background:#e0e0e0"></div>
<div class="a" style="left:35.2px;top:771px;width:1.6px;height:12px;background:#e0e0e0"></div>
<div class="a" style="left:52px;top:765px;width:84px;height:24px;border-radius:4px;background:#5a5960"></div>
<svg style="left:67px;top:770px" width="13" height="15" viewBox="0 0 13 15" fill="none" stroke="#dcdcdc" stroke-width="1.2" stroke-linejoin="round"><path d="M0.8 0.8 H12.2 L7.8 7 V13.8 L5.2 12.2 V7 Z"/></svg>
<div class="t" style="left:86px;top:771px;font-size:12px;color:#d2d2d2">미선택</div>
<div class="a" style="left:140px;top:765px;width:84px;height:24px;border-radius:4px;background:#5a5960"></div>
<svg style="left:147px;top:770px" width="16" height="14" viewBox="0 0 16 14" fill="none" stroke="#dcdcdc" stroke-width="1.2"><path d="M1 3 L3 1 V13.5 M6 2 H15 M6 6 H13 M6 10 H11 M6 13 H9"/></svg>
<div class="t" style="left:167px;top:771px;font-size:12px;color:#d2d2d2">파일 이름</div>
<div class="a" style="left:229px;top:771px;width:14px;height:14px;border-radius:2px;border:1.3px solid #e8e8e8"></div>
<svg style="left:231px;top:773px" width="10" height="10" viewBox="0 0 10 10" fill="none" stroke="#e8e8e8" stroke-width="1.3"><path d="M1 5 L4 8 L9 2"/></svg>
<div class="t" style="left:248px;top:770px;font-size:14px;color:#e6e6e6">모두 선택</div>
<div class="t" style="left:312px;top:772px;font-size:11.5px;color:#9c9c9c">1/1</div>
<svg style="left:527px;top:770px" width="13" height="14" viewBox="0 0 13 14"><path d="M0.7 0 V14" stroke="#9a9a9a" stroke-width="1.4"/><rect x="1.4" y="0.5" width="11.6" height="8.5" fill="#a2a2a2"/><path d="M4.5 4.8 L6.3 6.5 L9.5 3" stroke="#2b2a2f" stroke-width="1.1" fill="none"/></svg>
<svg style="left:547px;top:770px" width="13" height="14" viewBox="0 0 13 14"><path d="M0.7 0 V14" stroke="#9a9a9a" stroke-width="1.4"/><rect x="1.4" y="0.5" width="11.6" height="8.5" fill="#a2a2a2"/><path d="M5 3 L9 7 M9 3 L5 7" stroke="#2b2a2f" stroke-width="1.1" fill="none"/></svg>
<svg style="left:565.5px;top:770px" width="15" height="14" viewBox="0 0 24 23" fill="none" stroke="#a4a4a4" stroke-width="1.8" stroke-linejoin="round"><path d="M12 1.5 L15.1 8.2 L22.5 8.9 L16.9 13.8 L18.5 21.2 L12 17.4 L5.5 21.2 L7.1 13.8 L1.5 8.9 L8.9 8.2 Z"/></svg>
<svg style="left:583.5px;top:770px" width="15" height="14" viewBox="0 0 24 23" fill="none" stroke="#a4a4a4" stroke-width="1.8" stroke-linejoin="round"><path d="M12 1.5 L15.1 8.2 L22.5 8.9 L16.9 13.8 L18.5 21.2 L12 17.4 L5.5 21.2 L7.1 13.8 L1.5 8.9 L8.9 8.2 Z"/></svg>
<svg style="left:601.5px;top:770px" width="15" height="14" viewBox="0 0 24 23" fill="none" stroke="#a4a4a4" stroke-width="1.8" stroke-linejoin="round"><path d="M12 1.5 L15.1 8.2 L22.5 8.9 L16.9 13.8 L18.5 21.2 L12 17.4 L5.5 21.2 L7.1 13.8 L1.5 8.9 L8.9 8.2 Z"/></svg>
<svg style="left:619.5px;top:770px" width="15" height="14" viewBox="0 0 24 23" fill="none" stroke="#a4a4a4" stroke-width="1.8" stroke-linejoin="round"><path d="M12 1.5 L15.1 8.2 L22.5 8.9 L16.9 13.8 L18.5 21.2 L12 17.4 L5.5 21.2 L7.1 13.8 L1.5 8.9 L8.9 8.2 Z"/></svg>
<svg style="left:637.5px;top:770px" width="15" height="14" viewBox="0 0 24 23" fill="none" stroke="#a4a4a4" stroke-width="1.8" stroke-linejoin="round"><path d="M12 1.5 L15.1 8.2 L22.5 8.9 L16.9 13.8 L18.5 21.2 L12 17.4 L5.5 21.2 L7.1 13.8 L1.5 8.9 L8.9 8.2 Z"/></svg>

<div class="a" style="left:658px;top:770px;width:14px;height:14px;border-radius:50%;background:conic-gradient(from 0deg,#ff0000,#ff00ff,#0000ff,#00ffff,#00ff00,#ffff00,#ff0000)"></div>
<div class="t" style="left:677px;top:771px;font-size:12px;color:#a4a4a4">image 3.png</div>
<div class="a" style="left:940px;top:765px;width:107px;height:24px;border-radius:5px;background:#5a5960"></div>
<svg style="left:949px;top:770px" width="15" height="14" viewBox="0 0 15 14" fill="none" stroke="#e0e0e0" stroke-width="1.3"><rect x="0.8" y="0.8" width="13.4" height="12.4" rx="2.5"/><path d="M0.8 9 H14.2 M5 9 V13 M10 9 V13"/></svg>
<div class="t" style="left:968px;top:770px;font-size:12px;color:#e0e0e0">단일 보기</div>
<svg style="left:1025px;top:774px" width="11" height="7" viewBox="0 0 11 7" fill="none" stroke="#d0d0d0" stroke-width="1.2"><path d="M0.5 0.5 L5.5 5.5 L10.5 0.5"/></svg>
<div class="a" style="left:1051px;top:768px;width:1px;height:18px;background:#55545a"></div>
<div class="a" style="left:1056px;top:765px;width:24px;height:24px;border-radius:4px;background:#5a5960"></div>
<svg style="left:1060px;top:770px" width="16" height="14" viewBox="0 0 16 14" fill="none" stroke="#dcdcdc" stroke-width="1.2"><rect x="0.8" y="0.8" width="14.4" height="12.4" rx="3"/><path d="M8 0.8 V13.2"/></svg>
<!-- thumbnail -->
<div class="a" style="left:26px;top:802px;width:84px;height:84px;border:2px solid #ffcc00;background:#1c1c1c;overflow:hidden">
<svg style="left:10px;top:1px" width="59" height="78" viewBox="0 0 466 622" preserveAspectRatio="none">
<rect width="466" height="622" fill="#e1e4e3"/>
<path fill="#e0c0ab" d="M151 370 C152 420 148 448 140 463 C132 478 122 486 112 492 C90 504 50 515 -2 524 L-2 624 L468 624 L468 524 C420 515 378 504 356 492 C344 486 334 478 326 463 C318 448 313 420 312 370 Z"/>
<path fill="#161312" d="M228 8 Q165 10 125 52 Q102 76 96 110 Q86 140 88 170 Q88 200 92 225 Q98 250 112 262 L352 262 Q366 245 368 215 Q370 180 368 150 Q362 100 340 68 Q300 10 228 8Z"/>
<path fill="#e4bea8" d="M112 212 Q98 200 84 206 Q76 214 80 240 Q86 275 100 292 Q108 302 118 302 Z M346 212 Q360 200 374 206 Q382 214 378 240 Q372 275 358 292 Q350 302 340 302 Z"/>
<path fill="#ebd1c1" d="M226 109 C200 110 175 118 155 132 C135 146 124 160 116 180 Q109 195 108 207 Q106 240 112 270 Q118 300 128 333 Q140 365 153 383 Q165 402 176 413 Q200 431 228 431 Q256 431 283 413 Q296 402 310 383 Q322 365 331 333 Q340 300 345 270 Q352 240 350 207 Q349 195 342 180 C334 160 323 146 303 132 C283 118 258 110 226 109Z"/>
<path fill="#7a5e50" d="M122 213 Q160 195 206 208 L205 216 Q160 205 124 217Z M334 213 Q296 195 248 208 L249 216 Q296 205 332 217Z"/>
<ellipse cx="174" cy="244" rx="22" ry="8" fill="#3a2219"/><ellipse cx="283" cy="243" rx="22" ry="8" fill="#3a2219"/>
<ellipse cx="229" cy="370" rx="40" ry="18" fill="#d08a82"/>
</svg>
<div class="a" style="left:3px;top:4px;width:30px;height:16px;background:rgba(40,40,40,0.75);border-radius:2px"></div>
<div class="t" style="left:3px;top:7px;width:30px;text-align:center;font-size:10px;color:#f0f0f0">PNG</div>
<div class="a" style="left:3px;top:58px;width:20px;height:20px;background:rgba(40,40,40,0.7);border-radius:3px"></div>
<div class="t" style="left:6px;top:63px;width:14px;text-align:center;font-size:12px;color:#b0b8c0">1</div>
</div>
</body></html>
